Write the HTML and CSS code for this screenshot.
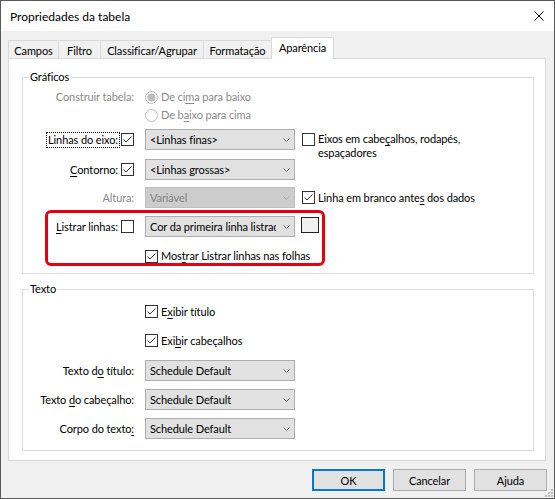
FILE: index.html
```html
<!DOCTYPE html>
<html lang="pt">
<head>
<meta charset="utf-8">
<title>Propriedades da tabela</title>
<link rel="stylesheet" href="styles.css">
</head>
<body>
<div class="window">
  <div class="titlebar">
    <span class="title">Propriedades da tabela</span>
    <span class="close"><svg width="10" height="10" viewBox="0 0 10 10"><path d="M0.5 0.5 L9.5 9.5 M9.5 0.5 L0.5 9.5" stroke="#000" stroke-width="1" fill="none"/></svg></span>
  </div>
  <div class="client">
    <div class="tabs">
      <div class="tab t1">Campos</div>
      <div class="tab t2">Filtro</div>
      <div class="tab t3">Classificar/Agrupar</div>
      <div class="tab t4">Formatação</div>
      <div class="tab t5 active">Aparência</div>
    </div>
    <div class="panel">
      <div class="group g1">
        <div class="legend">Gráficos</div>
        <div class="row r1">
          <div class="lab"><span class="disabled">Construir tabela:</span></div>
          <div class="ctl">
            <svg class="rb" width="13" height="13" viewBox="0 0 13 13"><circle cx="6.5" cy="6.5" r="6" fill="#fff" stroke="#bcbcbc"/><circle cx="6.5" cy="6.5" r="4" fill="#bcbcbc"/></svg>
            <span class="txt disabled">De ci<u>m</u>a para baixo</span>
          </div>
        </div>
        <div class="row r2">
          <div class="lab"></div>
          <div class="ctl">
            <svg class="rb" width="13" height="13" viewBox="0 0 13 13"><circle cx="6.5" cy="6.5" r="6" fill="#fff" stroke="#bcbcbc"/></svg>
            <span class="txt disabled">De b<u>a</u>ixo para cima</span>
          </div>
        </div>
        <div class="row r3">
          <div class="lab"><span class="ltxt focus">Linhas do eixo:</span><svg class="cb" width="13" height="13" viewBox="0 0 13 13"><rect x="0.5" y="0.5" width="12" height="12" fill="#fff" stroke="#333"/><path d="M2.5 6.5 L5 9 L10.5 3.5" fill="none" stroke="#333"/></svg></div>
          <div class="combo"><span class="val">&lt;Linhas finas&gt;</span><svg class="arrow" width="7" height="4" viewBox="0 0 7 4"><path d="M0.5 0.5 L3.5 3.5 L6.5 0.5" fill="none" stroke="#707070"/></svg></div>
          <div class="extra top">
            <svg class="cb" width="13" height="13" viewBox="0 0 13 13"><rect x="0.5" y="0.5" width="12" height="12" fill="#fff" stroke="#333"/></svg>
            <span class="txt two">Eixos em cabe<u>ç</u>alhos, rodapés,<br>espaçadores</span>
          </div>
        </div>
        <div class="row r4">
          <div class="lab"><span class="ltxt"><u>C</u>ontorno:</span><svg class="cb" width="13" height="13" viewBox="0 0 13 13"><rect x="0.5" y="0.5" width="12" height="12" fill="#fff" stroke="#333"/><path d="M2.5 6.5 L5 9 L10.5 3.5" fill="none" stroke="#333"/></svg></div>
          <div class="combo"><span class="val">&lt;Linhas grossas&gt;</span><svg class="arrow" width="7" height="4" viewBox="0 0 7 4"><path d="M0.5 0.5 L3.5 3.5 L6.5 0.5" fill="none" stroke="#707070"/></svg></div>
        </div>
        <div class="row r5">
          <div class="lab"><span class="disabled">Altura:</span></div>
          <div class="combo off"><span class="val">Variável</span><svg class="arrow" width="7" height="4" viewBox="0 0 7 4"><path d="M0.5 0.5 L3.5 3.5 L6.5 0.5" fill="none" stroke="#a9a9a9"/></svg></div>
          <div class="extra">
            <svg class="cb" width="13" height="13" viewBox="0 0 13 13"><rect x="0.5" y="0.5" width="12" height="12" fill="#fff" stroke="#333"/><path d="M2.5 6.5 L5 9 L10.5 3.5" fill="none" stroke="#333"/></svg>
            <span class="txt">Linha em branco ante<u>s</u> dos dados</span>
          </div>
        </div>
        <div class="stripe">
          <div class="row s1">
            <div class="lab"><span class="ltxt"><u>L</u>istrar linhas:</span><svg class="cb" width="13" height="13" viewBox="0 0 13 13"><rect x="0.5" y="0.5" width="12" height="12" fill="#fff" stroke="#333"/></svg></div>
            <div class="combo"><span class="val">Cor da primeira linha listrada</span><svg class="arrow" width="7" height="4" viewBox="0 0 7 4"><path d="M0.5 0.5 L3.5 3.5 L6.5 0.5" fill="none" stroke="#707070"/></svg></div>
            <div class="swatch"></div>
          </div>
          <div class="row s2">
            <div class="lab"></div>
            <div class="ctl">
              <svg class="cb" width="13" height="13" viewBox="0 0 13 13"><rect x="0.5" y="0.5" width="12" height="12" fill="#fff" stroke="#333"/><path d="M2.5 6.5 L5 9 L10.5 3.5" fill="none" stroke="#333"/></svg>
              <span class="txt">Mos<u>t</u>rar Listrar linhas nas folhas</span>
            </div>
          </div>
        </div>
      </div>
      <div class="group g2">
        <div class="legend">Texto</div>
        <div class="row t1r">
          <div class="lab"></div>
          <div class="ctl">
            <svg class="cb" width="13" height="13" viewBox="0 0 13 13"><rect x="0.5" y="0.5" width="12" height="12" fill="#fff" stroke="#333"/><path d="M2.5 6.5 L5 9 L10.5 3.5" fill="none" stroke="#333"/></svg>
            <span class="txt">E<u>x</u>ibir título</span>
          </div>
        </div>
        <div class="row t2r">
          <div class="lab"></div>
          <div class="ctl">
            <svg class="cb" width="13" height="13" viewBox="0 0 13 13"><rect x="0.5" y="0.5" width="12" height="12" fill="#fff" stroke="#333"/><path d="M2.5 6.5 L5 9 L10.5 3.5" fill="none" stroke="#333"/></svg>
            <span class="txt">Exi<u>b</u>ir cabeçalhos</span>
          </div>
        </div>
        <div class="row t3r">
          <div class="lab"><span>Texto d<u>o</u> título:</span></div>
          <div class="combo"><span class="val">Schedule Default</span><svg class="arrow" width="7" height="4" viewBox="0 0 7 4"><path d="M0.5 0.5 L3.5 3.5 L6.5 0.5" fill="none" stroke="#707070"/></svg></div>
        </div>
        <div class="row t4r">
          <div class="lab"><span>Texto <u>d</u>o cabeçalho:</span></div>
          <div class="combo"><span class="val">Schedule Default</span><svg class="arrow" width="7" height="4" viewBox="0 0 7 4"><path d="M0.5 0.5 L3.5 3.5 L6.5 0.5" fill="none" stroke="#707070"/></svg></div>
        </div>
        <div class="row t5r">
          <div class="lab"><span>Corpo do texto<u>:</u></span></div>
          <div class="combo"><span class="val">Schedule Default</span><svg class="arrow" width="7" height="4" viewBox="0 0 7 4"><path d="M0.5 0.5 L3.5 3.5 L6.5 0.5" fill="none" stroke="#707070"/></svg></div>
        </div>
      </div>
    </div>
    <div class="buttons">
      <div class="btn default">OK</div>
      <div class="btn">Cancelar</div>
      <div class="btn">Ajuda</div>
    </div>
  </div>
  <svg class="grip" width="8" height="8" viewBox="0 0 8 8">
    <rect x="6" y="0" width="2" height="2" fill="#bcbcbc"/>
    <rect x="3" y="3" width="2" height="2" fill="#bcbcbc"/>
    <rect x="6" y="3" width="2" height="2" fill="#bcbcbc"/>
    <rect x="0" y="6" width="2" height="2" fill="#bcbcbc"/>
    <rect x="3" y="6" width="2" height="2" fill="#bcbcbc"/>
    <rect x="6" y="6" width="2" height="2" fill="#bcbcbc"/>
  </svg>
</div>
</body>
</html>
```

FILE: styles.css
```css
* { box-sizing: border-box; }
html, body { margin: 0; padding: 0; }
body {
  width: 555px;
  height: 499px;
  overflow: hidden;
  font-family: Lato, "Liberation Sans", sans-serif;
  font-size: 11px;
  letter-spacing: -0.1px;
  color: #000;
  background: #f0f0f0;
}
u { text-decoration-thickness: 1px; text-underline-offset: 2px; }

.window {
  position: relative;
  width: 555px;
  height: 499px;
  border: 1px solid #5a5a5a;
  background: #f0f0f0;
  display: flex;
  flex-direction: column;
}
.titlebar {
  height: 30px;
  flex: none;
  background: #fff;
  display: flex;
  align-items: center;
  padding-left: 9px;
  font-size: 12px;
  letter-spacing: 0;
}
.close { margin-left: auto; margin-right: 10px; width: 10px; height: 10px; display: flex; }

.client { flex: 1; display: flex; flex-direction: column; }

.tabs {
  height: 27px;
  flex: none;
  display: flex;
  align-items: flex-end;
  padding-left: 7px;
}
.tab {
  height: 18px;
  border: 1px solid #d9d9d9;
  border-bottom: none;
  margin-right: -1px;
  display: flex;
  justify-content: center;
  align-items: center;
  padding-top: 1px;
  white-space: nowrap;
}
.t1 { width: 51px; }
.t2 { width: 43px; }
.t3 { width: 104px; }
.t4 { width: 69px; }
.t5 { width: 63px; }
.tab.active {
  height: 22px;
  margin-bottom: -1px;
  background: #fff;
  position: relative;
  z-index: 1;
  padding-top: 0;
  padding-bottom: 2px;
}

.panel {
  margin-left: 7px;
  width: 538px;
  height: 403px;
  flex: none;
  border: 1px solid #d9d9d9;
  background: #fff;
  display: flex;
  flex-direction: column;
}
.group {
  margin-left: 13px;
  width: 512px;
  border: 1px solid #dcdcdc;
  flex: none;
}
.g1 { margin-top: 18px; height: 197px; }
.g2 { margin-top: 15px; height: 162px; }
.legend {
  width: fit-content;
  margin: -9px 0 0 6px;
  padding: 0 1px;
  height: 16px;
  line-height: 16px;
  background: #fff;
}

.row { display: flex; align-items: center; height: 21px; line-height: 14px; }
.lab {
  width: 111px;
  flex: none;
  display: flex;
  justify-content: flex-end;
  align-items: center;
  white-space: nowrap;
}
.ltxt { margin-right: 3px; }
.focus { outline: 1px dotted #000; outline-offset: 0; padding: 0 1px; margin-right: 2px; }
.ctl { margin-left: 11px; display: flex; align-items: center; white-space: nowrap; }
.cb, .rb { flex: none; display: block; }
.txt { margin-left: 3px; }
.disabled { color: #8a8a8a; }

.r1 { margin-top: 3px; height: 18px; }
.r2 { height: 18px; }
.r3 { margin-top: 5px; }
.r4 { margin-top: 9px; }
.r5 { margin-top: 7px; }

.combo {
  margin-left: 11px;
  width: 150px;
  height: 21px;
  flex: none;
  border: 1px solid #adadad;
  background: #e1e1e1;
  display: flex;
  align-items: center;
  padding-left: 4px;
}
.combo .val { width: 126px; overflow: hidden; white-space: nowrap; }
.combo .arrow { margin-left: 7px; display: block; }
.combo.off { background: #cccccc; border-color: #bfbfbf; color: #838383; }

.extra { margin-left: 7px; display: flex; align-items: center; white-space: nowrap; }
.extra.top { align-self: flex-start; align-items: flex-start; }
.extra.top .cb { margin-top: 4px; }
.extra.top .two { margin-top: 3px; line-height: 14px; }

.stripe {
  margin: 2px 0 0 22px;
  width: 280px;
  height: 56px;
  border: 3px solid #e3000f;
  border-radius: 6px;
  padding-top: 3px;
}
.stripe .lab { width: 86px; }
.s2 { margin-top: 12px; height: 14px; }
.swatch {
  margin-left: 6px;
  align-self: flex-start;
  margin-top: 1px;
  width: 18px;
  height: 16px;
  border: 1px solid #222;
  background: #f0f0f0;
}

.t1r { margin-top: 4px; }
.t2r { margin-top: 8px; }
.t3r { margin-top: 9px; }
.t4r { margin-top: 8px; }
.t5r { margin-top: 8px; }

.buttons {
  margin-top: 8px;
  padding-right: 7px;
  display: flex;
  justify-content: flex-end;
  gap: 8px;
}
.btn {
  width: 73px;
  height: 22px;
  border: 1px solid #adadad;
  background: #e1e1e1;
  display: flex;
  justify-content: center;
  align-items: center;
}
.btn.default { border: 2px solid #0078d7; }

.grip { position: absolute; right: 1px; bottom: 1px; }
```
